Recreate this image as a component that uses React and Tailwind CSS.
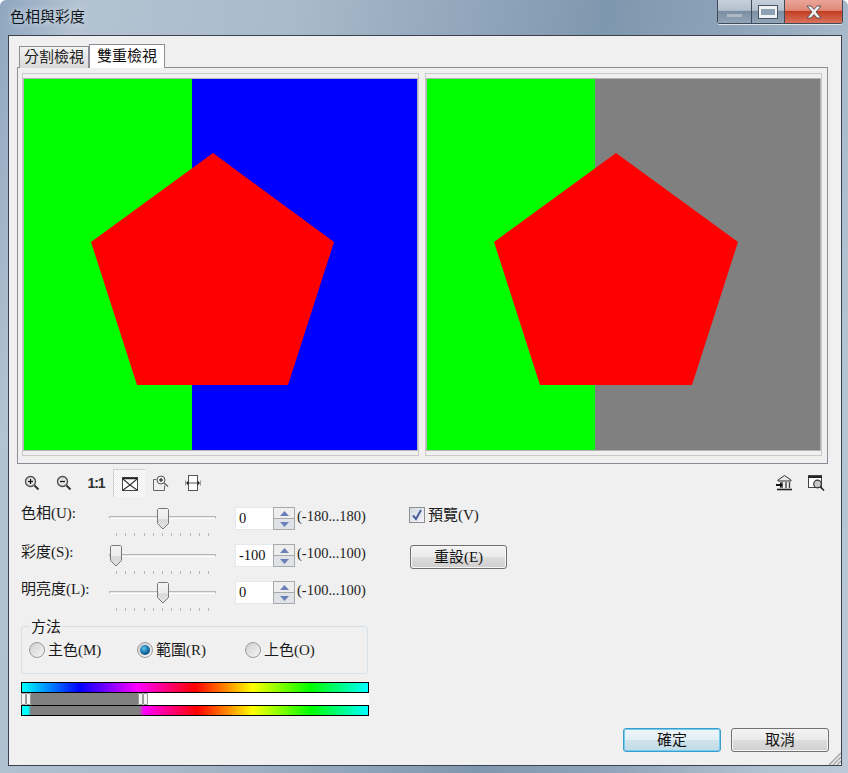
import React from "react";

const FONT = "[font-family:'Liberation_Serif','Noto_Sans_CJK_TC',serif]";

const Preview = ({ side }) => {
  const top = side === "left" ? "#0000ff" : "#808080";
  const points = side === "left" ? "189,74 310,163 264,306 113,306 67,163" : "189,74 311,163 265,306 113,306 67,163";
  return (
    <div className="w-[397px] h-[383px] border border-[#c9c9c9] py-1">
      <div className="border-x border-y border-[#b4b4b4] h-[373px]">
        <svg width="393" height="371" viewBox="0 0 393 371" className="block">
          <rect width="393" height="371" fill={top} />
          <rect width="168" height="371" fill="#00ff00" />
          <polygon points={points} fill="#ff0000" />
        </svg>
      </div>
    </div>
  );
};

const ZoomIcon = ({ plus }) => (
  <svg width="16" height="16" viewBox="0 0 16 16">
    <circle cx="6.5" cy="6.5" r="5" fill="#dfe3df" stroke="#4a4a4a" strokeWidth="1.3" />
    <path d="M4 6.5h5" stroke="#111" strokeWidth="1.2" />
    {plus && <path d="M6.5 4v5" stroke="#111" strokeWidth="1.2" />}
    <path d="M10.5 10.5l4 4" stroke="#333" strokeWidth="2" />
  </svg>
);

const FitIcon = () => (
  <svg width="16" height="14" viewBox="0 0 16 14">
    <rect x="0.5" y="0.5" width="15" height="13" fill="#fff" stroke="#444" />
    <path d="M0.5 1.5h15" stroke="#222" strokeWidth="1.5" />
    <path d="M1 2l7 6 7-6M1 13l7-5 7 5" fill="none" stroke="#333" strokeWidth="1.1" />
  </svg>
);

const ActualIcon = () => (
  <svg width="17" height="16" viewBox="0 0 17 16">
    <path d="M0.5 4.500v11h11v-5" fill="none" stroke="#666" />
    <path d="M0.5 4.500h3" stroke="#666" />
    <circle cx="8" cy="5" r="4" fill="#eef1ee" stroke="#555" />
    <path d="M6 5h4M8 3v4" stroke="#111" />
    <path d="M11 8l4 3.500" stroke="#666" strokeWidth="1.6" />
  </svg>
);

const WidthIcon = () => (
  <svg width="16" height="16" viewBox="0 0 16 16">
    <rect x="3.500" y="0.500" width="9" height="15" fill="#fff" stroke="#555" />
    <path d="M3.500 8h9" stroke="#555" />
    <path d="M0 5.500v5M16 5.500v5" stroke="#444" />
    <path d="M1 8l2.500-2.500v5zM15 8l-2.500-2.500v5z" fill="#222" />
  </svg>
);

const ImportIcon = () => (
  <svg width="17" height="16" viewBox="0 0 17 16">
    <path d="M2 5l6.500-4.500L15 5v1H2z" fill="#e8e8e8" stroke="#333" />
    <path d="M6 7v6M10 7v6M13.500 7v6" stroke="#444" strokeWidth="1.400" />
    <path d="M1 14.500h15" stroke="#222" strokeWidth="1.600" />
    <path d="M0 9h4V7l3 3-3 3v-2H0z" fill="#111" />
  </svg>
);

const PreviewIcon = () => (
  <svg width="17" height="16" viewBox="0 0 17 16">
    <rect x="0.500" y="0.500" width="13" height="12" fill="#fff" stroke="#444" />
    <path d="M0.500 2h13" stroke="#222" strokeWidth="2" />
    <circle cx="9.500" cy="9" r="3.800" fill="#c8c8c8" stroke="#333" strokeWidth="1.200" />
    <path d="M12.500 12l3.500 3.500" stroke="#222" strokeWidth="1.600" />
  </svg>
);

const Thumb = () => (
  <svg width="12" height="22" viewBox="0 0 12 22" className="block">
    <defs>
      <linearGradient id="thumbFill" x1="0" y1="0" x2="0" y2="1">
        <stop offset="0" stopColor="#f4f4f4" />
        <stop offset="0.5" stopColor="#ececec" />
        <stop offset="0.55" stopColor="#d8d8d8" />
        <stop offset="1" stopColor="#e4e4e4" />
      </linearGradient>
    </defs>
    <path d="M1.500 0.500h9l1 1v14L6 21 .5 15.500v-14z" fill="url(#thumbFill)" stroke="#777" />
  </svg>
);

const TICKS = [0, 1, 2, 3, 4, 5, 6, 7, 8, 9, 10];

const SliderRow = ({ label, labelClass, pad, thumb, value, range }) => (
  <div className="flex items-start h-[37px]">
    <div className={`w-[88px] text-[15px] leading-[20px] text-[#1a1a1a] ${labelClass}`}>{label}</div>
    <div className={`relative w-[107px] ${pad}`}>
      <div className="h-[3px] border border-[#b8b8b8] border-b-white bg-[#e7e7e7]" />
      <div className="flex justify-between mx-[7px] mt-[14px]">
        {TICKS.map((t) => (
          <span key={t} className="w-px h-[3px] bg-[#b5b5b5]" />
        ))}
      </div>
      <div className={`absolute top-[1px] ${thumb}`}>
        <Thumb />
      </div>
    </div>
    <div className="ml-[19px] flex w-[60px] h-[23px] bg-white border border-[#e3e9ef]">
      <div className="flex-1 pl-[3px] text-[14.5px] leading-[21px] text-[#111]">{value}</div>
      <div className="w-[22px] -my-px -mr-px flex flex-col border border-[#a9a9a9] bg-[#e4e4e4]">
        <div className="flex-1 flex items-center justify-center border-b border-[#a9a9a9] bg-[#eeeeee]">
          <svg width="9" height="5" viewBox="0 0 9 5"><path d="M4.500 0L9 5H0z" fill="#6b80b8" /></svg>
        </div>
        <div className="flex-1 flex items-center justify-center bg-[#dfe2e6]">
          <svg width="9" height="5" viewBox="0 0 9 5"><path d="M4.500 5L9 0H0z" fill="#6b80b8" /></svg>
        </div>
      </div>
    </div>
    <div className="ml-[2px] -mt-[1px] text-[14.5px] leading-[20px] text-[#222]">{range}</div>
  </div>
);

const Radio = ({ label, checked }) => (
  <div className="w-[108px] h-4 flex items-center gap-[3px]">
    <span className="w-4 h-4 rounded-full border border-[#9a9a9a] bg-[linear-gradient(135deg,#cfcfcf,#f6f6f6)] flex items-center justify-center">
      {checked && <span className="w-[10px] h-[10px] rounded-full bg-[radial-gradient(circle_at_40%_35%,#5fc4ee,#0a5f96_60%,#043d68)]" />}
    </span>
    <span className="text-[15px] leading-[20px] text-[#1a1a1a]">{label}</span>
  </div>
);

const Handle = () => (
  <div className="w-[10px] flex shrink-0">
    <span className="flex-1 bg-[#f4f4f4] border border-[#9a9a9a] rounded-[1px]" />
    <span className="flex-1 bg-[#f4f4f4] border border-[#9a9a9a] rounded-[1px]" />
  </div>
);

const TitleButton = ({ className, children }) => (
  <div className={`h-6 flex items-center justify-center border-b border-l border-[#3f4b5a] ${className}`}>{children}</div>
);

export default function App() {
  return (
    <div className={`w-[848px] h-[773px] overflow-hidden rounded-t-[6px] bg-[linear-gradient(100deg,#8ea6bf_0%,#b4c3d2_8%,#a9bacb_30%,#7f97ae_62%,#8ea3b8_75%,#b3c3d2_92%,#bccad8_100%)] ${FONT}`}>
      <div className="h-[35px] flex justify-between items-start">
        <div className="ml-[10px] mt-[7px] text-[15px] leading-[20px] text-[#10161c] [text-shadow:0_0_6px_#dfe8f0]">色相與彩度</div>
        <div className="flex mr-[5px] rounded-b-[3px] overflow-hidden shadow-[0_1px_0_#dce4ec]">
          <TitleButton className="w-[34px] bg-[linear-gradient(#c5d0db,#b3c0cd_45%,#7a8ea3_50%,#93a5b8)]">
            <span className="w-[15px] h-[3px] mt-[8px] bg-[#aeb9c4]" />
          </TitleButton>
          <TitleButton className="w-[33px] bg-[linear-gradient(#c5d0db,#b3c0cd_45%,#7a8ea3_50%,#93a5b8)]">
            <span className="w-[18px] h-[12px] border-[3px] border-x-2 border-[#f0f2f4] outline outline-1 outline-[#4a5563] bg-[#8ea0b3]" />
          </TitleButton>
          <TitleButton className="w-[59px] border-r bg-[linear-gradient(#e9a598,#e08a78_45%,#c33f22_50%,#d9735c)]">
            <svg width="16" height="14" viewBox="0 0 16 14">
              <path d="M1 1h4l3 3.500L11 1h4l-5 6 5 6h-4l-3-3.500L5 13H1l5-6z" fill="#f4f4f4" stroke="#4d4d52" strokeWidth="0.900" />
            </svg>
          </TitleButton>
        </div>
      </div>

      <div className="relative ml-2 w-[834px] h-[731px] border border-[#39424e] bg-[#f0f0f0] flex flex-col">
        {/* tabs */}
        <div className="flex items-end ml-[10px] mt-2 h-[24px] relative z-10 -mb-px">
          <div className="w-[70px] h-[22px] border border-b-0 border-[#8b8e96] bg-[linear-gradient(#f3f3f3,#d9d9d9)] text-[15px] leading-[20px] text-center text-[#222]">分割檢視</div>
          <div className="w-[76px] h-[24px] border border-b-0 border-[#8b8e96] bg-white text-[15px] leading-[22px] text-center text-[#111]">雙重檢視</div>
        </div>
        <div className="ml-2 w-[811px] h-[397px] border border-[#8b8e96] pl-1 pt-[5px] flex gap-[6px] shrink-0">
          <Preview side="left" />
          <Preview side="right" />
        </div>

        {/* toolbar */}
        <div className="flex items-center h-[28px] mt-[5px] ml-[7px] shrink-0">
          <div className="w-8 flex justify-center"><ZoomIcon plus /></div>
          <div className="w-8 flex justify-center"><ZoomIcon /></div>
          <div className="w-8 text-center text-[14px] font-bold tracking-[-1px] text-[#333] [font-family:'Liberation_Sans',sans-serif]">1:1</div>
          <div className="w-8 h-[28px] ml-px flex items-center justify-center border border-[#d0d0d0] border-r-0 border-b-0 bg-[repeating-conic-gradient(#ffffff_0_25%,#ececec_0_50%)] bg-[length:2px_2px]"><FitIcon /></div>
          <div className="w-8 flex justify-center"><ActualIcon /></div>
          <div className="w-8 flex justify-center"><WidthIcon /></div>
          <div className="ml-auto mr-[16px] flex gap-[15px]">
            <ImportIcon />
            <PreviewIcon />
          </div>
        </div>

        {/* controls */}
        <div className="flex flex-1 mt-[10px] ml-3 pr-3 pb-[13px]">
          <div className="w-[348px]">
            <SliderRow label="色相(U):" labelClass="-mt-[4px]" pad="pt-[9px]" thumb="left-[48px]" value="0" range="(-180...180)" />
            <SliderRow label="彩度(S):" labelClass="-mt-[2px]" pad="pt-[10px]" thumb="left-[1px]" value="-100" range="(-100...100)" />
            <SliderRow label="明亮度(L):" labelClass="-mt-[2px]" pad="pt-[10px]" thumb="left-[48px]" value="0" range="(-100...100)" />

            <div className="relative mt-2 w-[347px] h-[48px] border border-[#d6e0e8] rounded-[3px] pl-[7px] pt-[15px] flex">
              <span className="absolute left-2 -top-[9px] px-[1px] bg-[#f0f0f0] text-[15px] leading-[18px] text-[#1a1a1a]">方法</span>
              <Radio label="主色(M)" />
              <Radio label="範圍(R)" checked />
              <Radio label="上色(O)" />
            </div>

            <div className="mt-2 h-[11px] border border-black bg-[linear-gradient(90deg,#00ffff,#0000ff_16.67%,#ff00ff_33.33%,#ff0000_50%,#ffff00_66.67%,#00ff00_83.33%,#00ffff)]" />
            <div className="h-[12px] bg-white flex">
              <Handle />
              <div className="w-[107px] bg-[#808080]" />
              <Handle />
            </div>
            <div className="h-[11px] border border-black bg-[linear-gradient(90deg,#00ffff_0,#00ffff_6px,#808080_9px,#808080_117px,#ff00ff_122px,#ff0000_175px,#ffff00_231px,#00ff00_289px,#00ffff_346px)]" />
          </div>

          <div className="ml-[40px] w-[98px] text-[15px] text-[#1a1a1a]">
            <div className="flex items-center gap-[3px] h-[16px]">
              <span className="w-4 h-4 border border-[#8e8f8f] bg-[linear-gradient(135deg,#d4d9e2,#f2f4f8)] flex items-center justify-center">
                <svg width="12" height="12" viewBox="0 0 12 12"><path d="M2 6.500l3 3.500 5-9" fill="none" stroke="#47609a" strokeWidth="2" /></svg>
              </span>
              <span className="leading-[20px]">預覽(V)</span>
            </div>
            <div className="mt-[22px] ml-px h-6 border border-[#707070] rounded-[3px] bg-[linear-gradient(#f3f3f3,#ebebeb_48%,#dddddd_52%,#cfcfcf)] shadow-[inset_0_0_0_1px_#f6f6f6] text-center leading-[22px] text-[#111]">重設(E)</div>
          </div>

          <div className="flex-1 flex items-end justify-end gap-[10px] text-[15px] text-[#111]">
            <div className="w-[98px] h-6 border border-[#3c9ccb] rounded-[3px] bg-[linear-gradient(#eef6f9,#e2eff5_48%,#cfe3ec_52%,#c2dce7)] shadow-[inset_0_0_0_1px_#6fcdf0] text-center leading-[22px]">確定</div>
            <div className="w-[98px] h-6 border border-[#707070] rounded-[3px] bg-[linear-gradient(#f3f3f3,#ebebeb_48%,#dddddd_52%,#cfcfcf)] shadow-[inset_0_0_0_1px_#f6f6f6] text-center leading-[22px]">取消</div>
          </div>
        </div>

        {/* resize grip */}
        <svg width="14" height="14" viewBox="0 0 14 14" className="absolute right-0 bottom-0">
          <path d="M14 2L2 14M14 6L6 14M14 10L10 14" stroke="#a8a8a8" strokeWidth="1.500" />
        </svg>
      </div>
    </div>
  );
}
